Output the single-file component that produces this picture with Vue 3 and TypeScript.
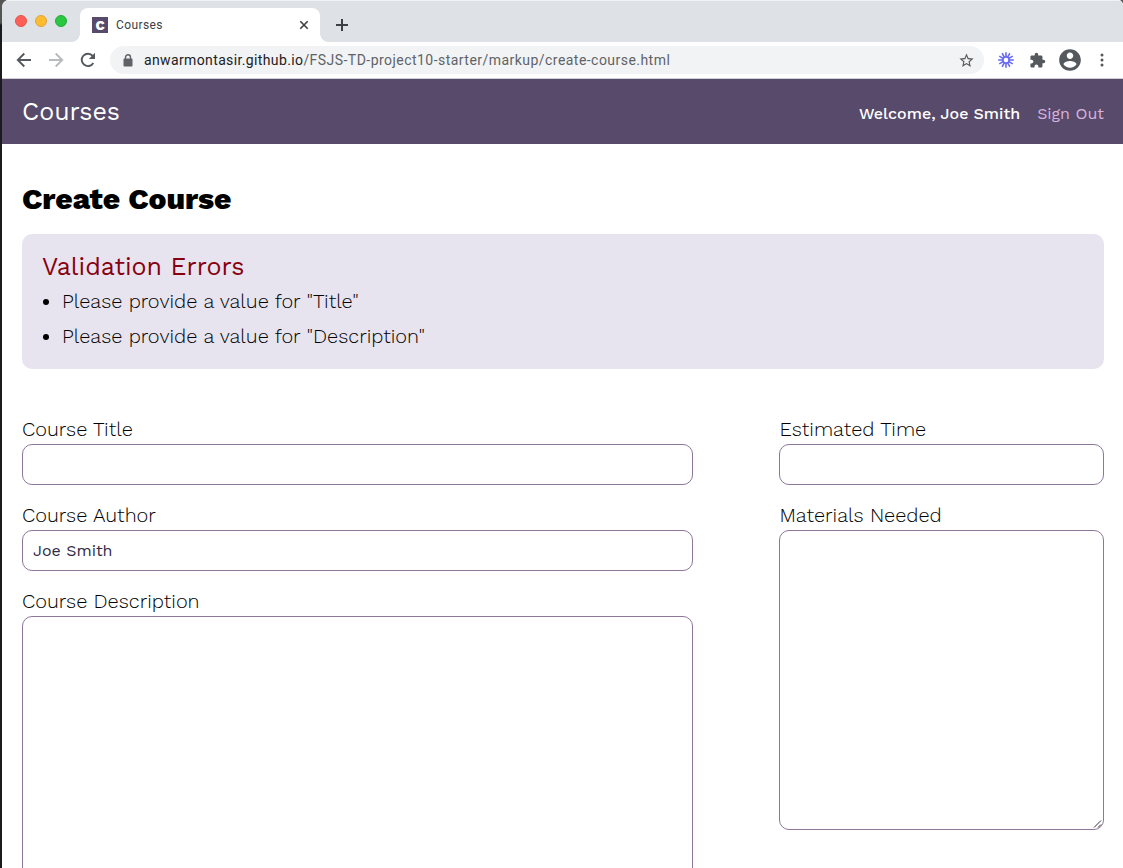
<script setup lang="ts">
import { ref } from 'vue'

const errors: string[] = [
  'Please provide a value for "Title"',
  'Please provide a value for "Description"',
]
const title = ref('')
const author = ref('Joe Smith')
const description = ref('')
const time = ref('')
const materials = ref('')
const rays: number[] = Array.from({ length: 12 }, (_, i) => i * 30)
</script>

<template>
  <div class="desktop">
    <div class="window">
      <div class="tabs">
        <div class="lights"><i class="red"></i><i class="amber"></i><i class="green"></i></div>
        <div class="tab">
          <span class="favicon">C</span>
          <span class="tab-name">Courses</span>
          <svg class="close" width="10" height="10" viewBox="0 0 10 10"><path d="M1.3 1.3 8.7 8.7M8.7 1.3 1.3 8.7" /></svg>
        </div>
        <svg class="plus" width="14" height="14" viewBox="0 0 14 14"><path d="M7 1V13M1 7H13" /></svg>
      </div>
      <div class="toolbar">
        <svg class="nav-icon" width="16" height="16" viewBox="0 0 16 16"><path d="M15 8H2M8.3 1.5 1.8 8l6.5 6.5" /></svg>
        <svg class="nav-icon faded" width="16" height="16" viewBox="0 0 16 16"><path d="M1 8H14M7.7 1.5 14.2 8l-6.5 6.5" /></svg>
        <svg class="nav-icon" width="16" height="16" viewBox="0 0 16 16"><path d="M13.3 11A6.2 6.2 0 1 1 12.7 3.9" /><path class="solid" d="M15 .8V7H8.8Z" /></svg>
        <div class="address">
          <svg class="lock" width="10" height="13" viewBox="0 0 10 13"><rect x=".5" y="4.5" width="9" height="8" rx="1" /><path d="M2.5 5V3.3a2.5 2.5 0 0 1 5 0V5" /></svg>
          <span class="url"><b>anwarmontasir.github.io</b>/FSJS-TD-project10-starter/markup/create-course.html</span>
          <svg class="star" width="17" height="17" viewBox="0 0 24 24"><path d="M22 9.24l-7.19-.62L12 2 9.19 8.63 2 9.24l5.46 4.73L5.82 21 12 17.27 18.18 21l-1.63-7.03L22 9.24zM12 15.4l-3.76 2.27 1-4.28-3.32-2.88 4.38-.38L12 6.1l1.71 4.04 4.38.38-3.32 2.88 1 4.28L12 15.4z" /></svg>
        </div>
        <svg class="burst" width="16" height="16" viewBox="-8 -8 16 16">
          <path v-for="a in rays" :key="a" d="M0-3V-7.8" :transform="`rotate(${a})`" />
          <circle r="3.1" />
        </svg>
        <svg class="puzzle" width="17" height="17" viewBox="0 0 24 24"><path d="M20.5 11H19V7c0-1.1-.9-2-2-2h-4V3.5a2.5 2.5 0 0 0-5 0V5H4c-1.1 0-1.99.9-1.99 2v3.8H3.5c1.49 0 2.7 1.21 2.7 2.7s-1.21 2.7-2.7 2.7H2V20c0 1.1.9 2 2 2h3.8v-1.5c0-1.49 1.21-2.7 2.7-2.7s2.7 1.21 2.7 2.7V22H17c1.1 0 2-.9 2-2v-4h1.5a2.5 2.5 0 0 0 0-5z" /></svg>
        <svg class="avatar" width="26" height="26" viewBox="0 0 24 24"><path d="M12 2C6.48 2 2 6.48 2 12s4.48 10 10 10 10-4.48 10-10S17.52 2 12 2zm0 3c1.66 0 3 1.34 3 3s-1.34 3-3 3-3-1.34-3-3 1.34-3 3-3zm0 14.2c-2.5 0-4.71-1.28-6-3.22.03-1.99 4-3.08 6-3.08 1.99 0 5.97 1.09 6 3.08-1.29 1.94-3.5 3.22-6 3.22z" /></svg>
        <svg class="dots" width="4" height="14" viewBox="0 0 4 14"><circle cx="2" cy="2" r="1.5" /><circle cx="2" cy="7" r="1.5" /><circle cx="2" cy="12" r="1.5" /></svg>
      </div>

      <header class="header">
        <h1 class="logo">Courses</h1>
        <nav class="user">
          <span class="welcome">Welcome, Joe Smith</span>
          <a class="signout">Sign Out</a>
        </nav>
      </header>

      <main class="main">
        <h2 class="heading">Create Course</h2>
        <section class="validation">
          <h3>Validation Errors</h3>
          <ul>
            <li v-for="e in errors" :key="e">{{ e }}</li>
          </ul>
        </section>
        <form class="form">
          <div class="column">
            <label for="title">Course Title</label>
            <input id="title" v-model="title" type="text" />
            <label for="author">Course Author</label>
            <input id="author" v-model="author" type="text" />
            <label for="desc">Course Description</label>
            <textarea id="desc" v-model="description"></textarea>
          </div>
          <div class="column side">
            <label for="time">Estimated Time</label>
            <input id="time" v-model="time" type="text" />
            <label for="materials">Materials Needed</label>
            <div class="area">
              <textarea id="materials" v-model="materials"></textarea>
              <svg class="grip" width="10" height="10" viewBox="0 0 10 10"><path d="M1 8.5 8 1.5M5 8.5 8 5.5" /></svg>
            </div>
          </div>
        </form>
      </main>
    </div>
  </div>
</template>

<style>
html,
body {
  margin: 0;
  overflow: hidden;
}
</style>

<style scoped>
* {
  box-sizing: border-box;
}
.desktop {
  width: 1123px;
  height: 868px;
  padding-left: 2px;
  overflow: hidden;
  background: linear-gradient(#555 0, #555 23px, #1b1b1d 25px);
  font-family: 'Work Sans', Inter, 'Open Sans', sans-serif;
}
.window {
  height: 868px;
  overflow: hidden;
  background: #fff;
  border-radius: 7px 5px 0 0;
}
svg {
  display: block;
  flex: none;
}
.tabs {
  height: 42px;
  display: flex;
  background: #dee1e6;
  border-top: 1px solid #f1f2f4;
}
.lights {
  display: flex;
  gap: 8px;
  padding: 14px 0 0 13px;
  width: 78px;
}
.lights i {
  width: 12px;
  height: 12px;
  border-radius: 50%;
  border: 1px solid;
}
.lights .red { background: #ff5f57; border-color: #e2554e; }
.lights .amber { background: #febc2e; border-color: #e0a33a; }
.lights .green { background: #28c840; border-color: #24aa38; }
.tab {
  width: 240px;
  height: 34px;
  margin-top: 7px;
  padding: 0 11px 0 12px;
  display: flex;
  align-items: center;
  background: #fff;
  border-radius: 8px 8px 0 0;
  position: relative;
}
.tab::before,
.tab::after {
  content: '';
  position: absolute;
  bottom: 0;
  width: 8px;
  height: 8px;
}
.tab::before {
  left: -8px;
  background: radial-gradient(circle at 0 0, transparent 7.5px, #fff 8px);
}
.tab::after {
  right: -8px;
  background: radial-gradient(circle at 100% 0, transparent 7.5px, #fff 8px);
}
.favicon {
  width: 16px;
  height: 16px;
  background: #574a6b;
  color: #fff;
  font: 800 13.5px/16px 'Work Sans', Inter, sans-serif;
  text-align: center;
}
.tab-name {
  margin-left: 8px;
  flex: 1;
  font: 12px/16px Roboto, sans-serif;
  letter-spacing: 0.4px;
  color: #3c4043;
}
.close,
.plus {
  fill: none;
  stroke: #3c4043;
  stroke-width: 1.6;
}
.plus {
  margin: 17px 0 0 15px;
  stroke-width: 2;
}
.toolbar {
  height: 37px;
  display: flex;
  align-items: center;
  padding-left: 14px;
  border-bottom: 1px solid #d0d0d4;
}
.nav-icon {
  margin-right: 16px;
  fill: none;
  stroke: #55595e;
  stroke-width: 1.9;
}
.faded {
  stroke: #b8babd;
}
.solid {
  fill: #55595e;
  stroke: none;
}
.address {
  margin-left: -2px;
  width: 874px;
  height: 28px;
  border-radius: 14px;
  background: #f1f3f4;
  display: flex;
  align-items: center;
  padding: 0 9.5px 0 13px;
}
.lock {
  fill: #5f6368;
  margin-right: 11px;
}
.lock path {
  fill: none;
  stroke: #5f6368;
  stroke-width: 1.4;
}
.url {
  flex: 1;
  font: 14px/20px Roboto, sans-serif;
  letter-spacing: 0.46px;
  color: #5f6368;
  white-space: nowrap;
}
.url b {
  font-weight: 400;
  letter-spacing: 0.37px;
  color: #202124;
}
.star,
.puzzle,
.avatar,
.dots {
  fill: #55595e;
}
.burst {
  margin-left: 14px;
  fill: none;
  stroke: #6c6cf0;
  stroke-width: 1.6;
}
.puzzle {
  margin-left: 15px;
}
.avatar {
  margin-left: 10.5px;
}
.dots {
  margin-left: 17.5px;
}
.header {
  height: 65px;
  padding: 0 19px 0 20px;
  display: flex;
  align-items: center;
  justify-content: space-between;
  background: #574a6b;
}
.logo {
  margin: 0;
  font-size: 25px;
  font-weight: 400;
  color: #fff;
}
.user {
  display: flex;
  gap: 17px;
  padding-top: 3px;
  font-size: 16px;
  font-weight: 500;
  white-space: nowrap;
}
.welcome {
  color: #fff;
}
.signout {
  color: #d9b3dd;
  font-weight: 400;
}
.main {
  padding: 32px 19px 0 20px;
}
.heading {
  margin: 0;
  height: 58px;
  line-height: 45px;
  font-size: 30px;
  font-weight: 800;
  letter-spacing: -0.03px;
  color: #000;
}
.validation {
  height: 135px;
  padding: 15px 20px;
  border-radius: 10px;
  background: #e7e4ef;
}
.validation h3 {
  margin: 0;
  font-size: 25px;
  line-height: 35px;
  font-weight: 400;
  color: #880010;
}
ul {
  margin: 0;
  padding: 0;
  list-style: none;
}
li {
  display: flex;
  align-items: center;
  height: 35px;
  padding-bottom: 2px;
  font-size: 20px;
  font-weight: 300;
  color: #000;
}
li::before {
  content: '';
  width: 6px;
  height: 6px;
  margin: 2px 13px 0 1px;
  border-radius: 50%;
  background: #000;
}
.form {
  margin-top: 46px;
  display: grid;
  grid-template-columns: 671px 325px;
  gap: 86px;
}
.column {
  display: flex;
  flex-direction: column;
}
label {
  height: 29px;
  line-height: 29px;
  font-size: 20px;
  font-weight: 300;
  color: #000;
  white-space: nowrap;
}
.side label {
  padding-left: 0.5px;
}
input,
textarea {
  display: block;
  width: 100%;
  margin: 0;
  padding: 0 10px;
  border: 1px solid #8d7899;
  border-radius: 10px;
  background: #fff;
  font-family: inherit;
  font-size: 16px;
  color: #322a45;
  outline: none;
  resize: none;
}
input {
  height: 41px;
  margin-bottom: 16px;
}
textarea {
  height: 300px;
}
.area {
  position: relative;
}
.grip {
  position: absolute;
  right: 1px;
  bottom: 1px;
  fill: none;
  stroke: #333;
  stroke-width: 1;
}
</style>
